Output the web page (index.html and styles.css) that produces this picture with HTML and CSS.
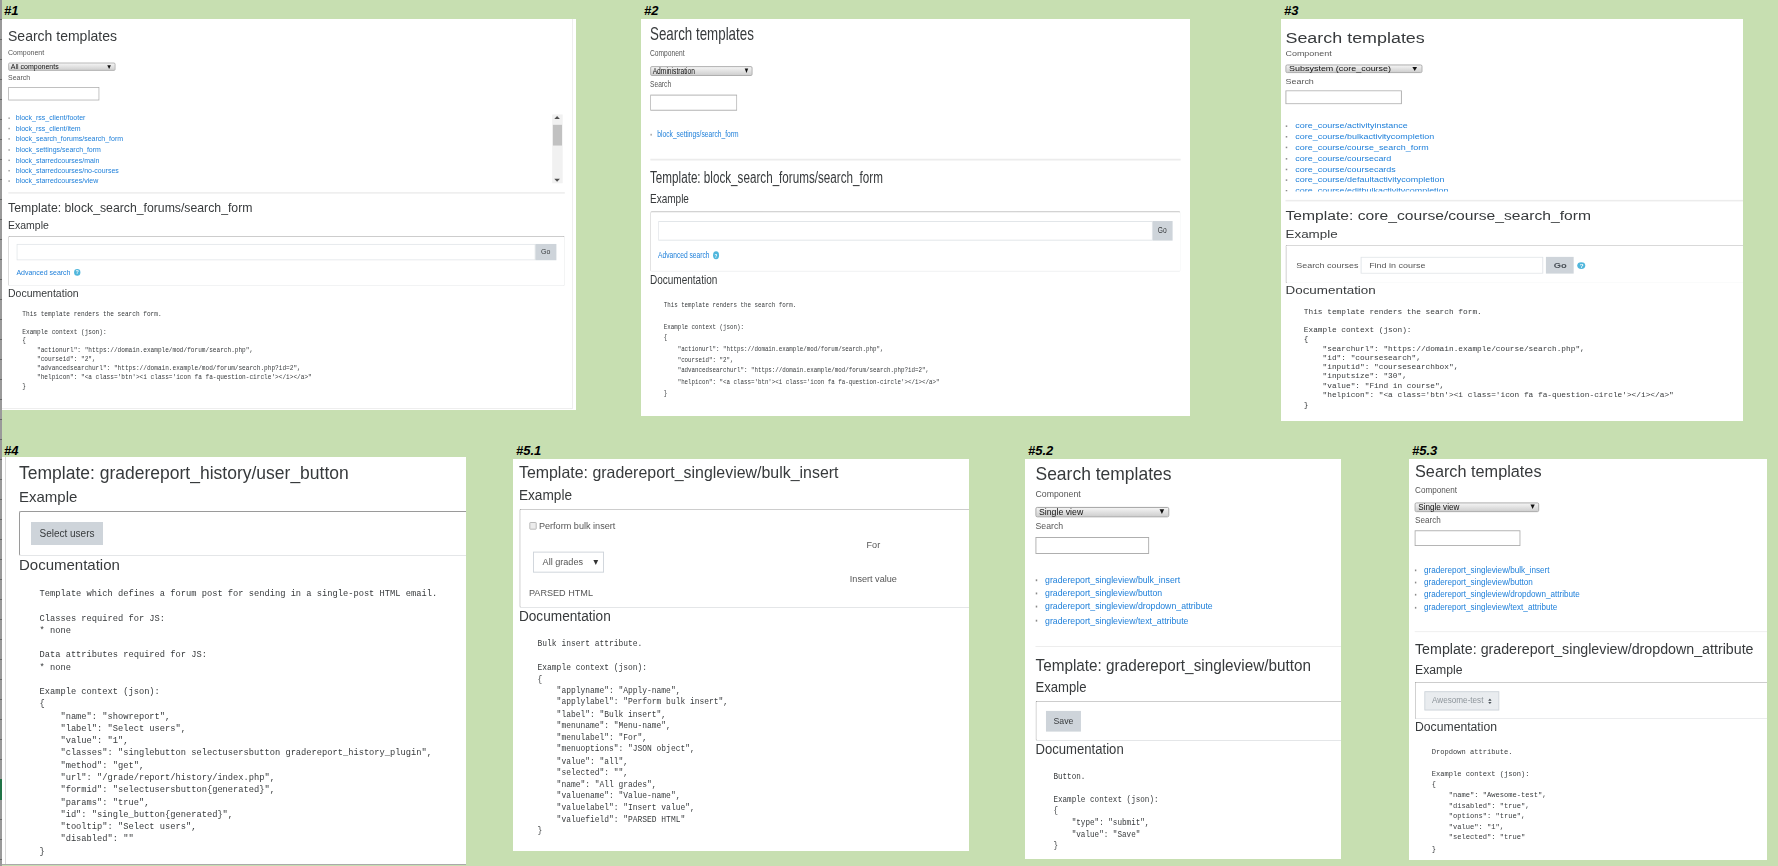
FILE: index.html
```html
<!DOCTYPE html>
<html lang="en">
<head>
<meta charset="utf-8">
<title>Template library screenshots</title>
<link rel="stylesheet" href="styles.css">
</head>
<body>
<div class="edge"></div>
<div class="edge-mark"></div>

<section class="shot s1">
  <div class="tag">#1</div>
  <div class="panel">
    <div class="sheet">
      <h2>Search templates</h2>
      <div class="lbl">Component</div>
      <div class="picker"><span>All components</span><i>▼</i></div>
      <div class="lbl lbl-search">Search</div>
      <div class="search"></div>
      <div class="list-wrap">
        <ul class="list">
          <li><a>block_rss_client/footer</a></li>
          <li><a>block_rss_client/item</a></li>
          <li><a>block_search_forums/search_form</a></li>
          <li><a>block_settings/search_form</a></li>
          <li><a>block_starredcourses/main</a></li>
          <li><a>block_starredcourses/no-courses</a></li>
          <li><a>block_starredcourses/view</a></li>
        </ul>
        <div class="scrollbar"><b class="up"></b><b class="thumb"></b><b class="down"></b></div>
      </div>
      <div class="rule"></div>
      <h2 class="tpl">Template: block_search_forums/search_form</h2>
      <h3>Example</h3>
      <div class="box">
        <div class="input-row"><div class="field"></div><div class="btn go">Go</div></div>
        <div class="adv"><a>Advanced search</a><span class="help">?</span></div>
      </div>
      <h3 class="doc">Documentation</h3>
<pre>This template renders the search form.

Example context (json):
{
    "actionurl": "https://domain.example/mod/forum/search.php",
    "courseid": "2",
    "advancedsearchurl": "https://domain.example/mod/forum/search.php?id=2",
    "helpicon": "&lt;a class='btn'&gt;&lt;i class='icon fa fa-question-circle'&gt;&lt;/i&gt;&lt;/a&gt;"
}</pre>
    </div>
  </div>
</section>

<section class="shot s2">
  <div class="tag">#2</div>
  <div class="panel">
    <div class="sheet">
      <h2>Search templates</h2>
      <div class="lbl">Component</div>
      <div class="picker"><span>Administration</span><i>▼</i></div>
      <div class="lbl lbl-search">Search</div>
      <div class="search"></div>
      <div class="list-wrap">
        <ul class="list">
          <li><a>block_settings/search_form</a></li>
        </ul>
      </div>
      <div class="rule"></div>
      <h2 class="tpl">Template: block_search_forums/search_form</h2>
      <h3>Example</h3>
      <div class="box">
        <div class="input-row"><div class="field"></div><div class="btn go">Go</div></div>
        <div class="adv"><a>Advanced search</a><span class="help">?</span></div>
      </div>
      <h3 class="doc">Documentation</h3>
<pre>This template renders the search form.

Example context (json):
{
    "actionurl": "https://domain.example/mod/forum/search.php",
    "courseid": "2",
    "advancedsearchurl": "https://domain.example/mod/forum/search.php?id=2",
    "helpicon": "&lt;a class='btn'&gt;&lt;i class='icon fa fa-question-circle'&gt;&lt;/i&gt;&lt;/a&gt;"
}</pre>
    </div>
  </div>
</section>

<section class="shot s3">
  <div class="tag">#3</div>
  <div class="panel">
    <div class="sheet">
      <h2>Search templates</h2>
      <div class="lbl">Component</div>
      <div class="picker"><span>Subsystem (core_course)</span><i>▼</i></div>
      <div class="lbl lbl-search">Search</div>
      <div class="search"></div>
      <div class="list-wrap">
        <ul class="list">
          <li><a>core_course/activityinstance</a></li>
          <li><a>core_course/bulkactivitycompletion</a></li>
          <li><a>core_course/course_search_form</a></li>
          <li><a>core_course/coursecard</a></li>
          <li><a>core_course/coursecards</a></li>
          <li><a>core_course/defaultactivitycompletion</a></li>
          <li><a>core_course/editbulkactivitycompletion</a></li>
        </ul>
      </div>
      <div class="rule"></div>
      <h2 class="tpl">Template: core_course/course_search_form</h2>
      <h3>Example</h3>
      <div class="box box-course">
        <span class="course-label">Search courses</span>
        <div class="field field-course">Find in course</div>
        <div class="btn go-course">Go</div>
        <span class="help">?</span>
      </div>
      <h3 class="doc">Documentation</h3>
<pre>This template renders the search form.

Example context (json):
{
    "searchurl": "https://domain.example/course/search.php",
    "id": "coursesearch",
    "inputid": "coursesearchbox",
    "inputsize": "30",
    "value": "Find in course",
    "helpicon": "&lt;a class='btn'&gt;&lt;i class='icon fa fa-question-circle'&gt;&lt;/i&gt;&lt;/a&gt;"
}</pre>
    </div>
  </div>
</section>

<section class="shot s4">
  <div class="tag">#4</div>
  <div class="panel">
    <div class="sheet">
      <h2 class="tpl tpl-first">Template: gradereport_history/user_button</h2>
      <h3>Example</h3>
      <div class="box"><div class="btn btn-big">Select users</div></div>
      <h3 class="doc">Documentation</h3>
<pre>Template which defines a forum post for sending in a single-post HTML email.

Classes required for JS:
* none

Data attributes required for JS:
* none

Example context (json):
{
    "name": "showreport",
    "label": "Select users",
    "value": "1",
    "classes": "singlebutton selectusersbutton gradereport_history_plugin",
    "method": "get",
    "url": "/grade/report/history/index.php",
    "formid": "selectusersbutton{generated}",
    "params": "true",
    "id": "single_button{generated}",
    "tooltip": "Select users",
    "disabled": ""
}</pre>
    </div>
  </div>
</section>

<section class="shot s51">
  <div class="tag">#5.1</div>
  <div class="panel">
    <div class="sheet">
      <h2 class="tpl tpl-first">Template: gradereport_singleview/bulk_insert</h2>
      <h3>Example</h3>
      <div class="box box-bulk">
        <div class="check-row"><span class="check"></span>Perform bulk insert</div>
        <div class="mid">For</div>
        <div class="grades"><span>All grades</span><i>▼</i></div>
        <div class="mid">Insert value</div>
        <div>PARSED HTML</div>
      </div>
      <h3 class="doc">Documentation</h3>
<pre>Bulk insert attribute.

Example context (json):
{
    "applyname": "Apply-name",
    "applylabel": "Perform bulk insert",
    "label": "Bulk insert",
    "menuname": "Menu-name",
    "menulabel": "For",
    "menuoptions": "JSON object",
    "value": "all",
    "selected": "",
    "name": "All grades",
    "valuename": "Value-name",
    "valuelabel": "Insert value",
    "valuefield": "PARSED HTML"
}</pre>
    </div>
  </div>
</section>

<section class="shot s52">
  <div class="tag">#5.2</div>
  <div class="panel">
    <div class="sheet">
      <h2>Search templates</h2>
      <div class="lbl">Component</div>
      <div class="picker"><span>Single view</span><i>▼</i></div>
      <div class="lbl lbl-search">Search</div>
      <div class="search"></div>
      <div class="list-wrap">
        <ul class="list">
          <li><a>gradereport_singleview/bulk_insert</a></li>
          <li><a>gradereport_singleview/button</a></li>
          <li><a>gradereport_singleview/dropdown_attribute</a></li>
          <li><a>gradereport_singleview/text_attribute</a></li>
        </ul>
      </div>
      <div class="rule"></div>
      <h2 class="tpl">Template: gradereport_singleview/button</h2>
      <h3>Example</h3>
      <div class="box box-save"><div class="btn btn-save">Save</div></div>
      <h3 class="doc">Documentation</h3>
<pre>Button.

Example context (json):
{
    "type": "submit",
    "value": "Save"
}</pre>
    </div>
  </div>
</section>

<section class="shot s53">
  <div class="tag">#5.3</div>
  <div class="panel">
    <div class="sheet">
      <h2>Search templates</h2>
      <div class="lbl">Component</div>
      <div class="picker"><span>Single view</span><i>▼</i></div>
      <div class="lbl lbl-search">Search</div>
      <div class="search"></div>
      <div class="list-wrap">
        <ul class="list">
          <li><a>gradereport_singleview/bulk_insert</a></li>
          <li><a>gradereport_singleview/button</a></li>
          <li><a>gradereport_singleview/dropdown_attribute</a></li>
          <li><a>gradereport_singleview/text_attribute</a></li>
        </ul>
      </div>
      <div class="rule"></div>
      <h2 class="tpl">Template: gradereport_singleview/dropdown_attribute</h2>
      <h3>Example</h3>
      <div class="box box-save">
        <div class="disabled-select"><span>Awesome-test</span>
          <svg class="updown" viewBox="0 0 6 10" width="6" height="10"><path d="M3 0.5 6 4H0z M3 9.5 0 6h6z" fill="#495057"/></svg>
        </div>
      </div>
      <h3 class="doc">Documentation</h3>
<pre>Dropdown attribute.

Example context (json):
{
    "name": "Awesome-test",
    "disabled": "true",
    "options": "true",
    "value": "1",
    "selected": "true"
}</pre>
    </div>
  </div>
</section>
</body>
</html>
```
FILE: styles.css
```css
* { box-sizing: border-box; }
html, body { margin: 0; height: 100%; }
body {
  position: relative;
  height: 866px;
  overflow: hidden;
  background: #c7dfb1;
  font-family: "Liberation Sans", Arial, sans-serif;
}
.edge {
  position: absolute; left: 0; top: 0; bottom: 0; width: 2px;
  background: repeating-linear-gradient(#9a9a9a 0 19px, #666 19px 20px);
}
.edge-mark { position: absolute; left: 0; top: 779px; width: 2px; height: 21px; background: #217346; }

/* each screenshot sits on a free canvas */
.shot { position: absolute; left: var(--x); top: var(--y); width: var(--w); }
.tag {
  height: var(--th, 16px); padding-left: var(--tx, 3px);
  font: italic bold 13px/15px "Liberation Sans", Arial, sans-serif;
  color: #000;
}
.panel { height: var(--h); background: #fff; overflow: hidden; }

.s1 { --x: 2px; --y: 3px; --w: 574px; --h: 391px; --tx: 2px;
  --sx: .7; --sy: .74; --pt: 11px; --pl: 8.6px; --sel: 7px; --sg: 3px; --lt: 17px; --lh: 99px; --lb: 8px; }
.s2 { --x: 641px; --y: 3px; --w: 549px; --h: 397px;
  --sx: .667; --sy: .89; --pt: 5px; --pl: 13.5px; --lt: 20px; --lb: 20px; }
.s3 { --x: 1281px; --y: 3px; --w: 462px; --h: 402px;
  --sx: .895; --sy: .76; --pt: 12px; --pl: 5px; --sg: 4px; --lt: 22px; --lh: 93px; --lb: 11px; }
.s4 { --x: 2px; --y: 443px; --w: 464px; --h: 408px; --tx: 2px; --th: 14px;
  --sx: 1; --sy: 1; --pt: 4px; --pl: 17px; }
.s51 { --x: 513px; --y: 443px; --w: 456px; --h: 392px;
  --sx: .91; --sy: .955; --pt: 2px; --pl: 6.5px; }
.s52 { --x: 1025px; --y: 443px; --w: 316px; --h: 400px;
  --sx: .874; --sy: .94; --pt: 3px; --pl: 12px; }
.s53 { --x: 1409px; --y: 443px; --w: 358px; --h: 401px;
  --sx: .813; --sy: .87; --pt: 2px; --pl: 7.4px; }

.s1 .panel { box-shadow: inset -3px -1px 0 #fff, inset -4px -2px 0 #eee; }
.s4 .panel { border-bottom: 1px solid #aaa; box-shadow: inset 3px 0 0 #fff, inset 4px 0 0 #d8d8d8; }

/* page content, laid out at one size and squeezed like the pasted picture */
.sheet {
  width: calc(795px + var(--pl));
  padding: var(--pt) 0 0 var(--pl);
  transform: scale(var(--sx), var(--sy));
  transform-origin: 0 0;
  filter: blur(.3px);
  font-size: 10px;
  line-height: 14px;
  color: #373a3c;
}
h2 { margin: 0; font-size: 20px; line-height: 24px; font-weight: 400; white-space: nowrap; }
h3 { margin: 3px 0 0; font-size: 15px; line-height: 18px; font-weight: 400; }
h3.doc { margin-top: 0; }
.tpl { margin-top: 7px; font-size: 17.5px; }
.tpl-first { margin-top: 0; }

.lbl { margin-top: 3px; color: #555; }
.lbl-search { margin-top: var(--sg, 2px); }
.picker {
  display: flex; justify-content: space-between; align-items: center;
  width: 153px; height: 11px; margin-top: var(--sel, 7px); padding: 0 3px;
  border: 1px solid #999; border-radius: 2px;
  background: linear-gradient(#f4f4f4, #cfcfcf);
  color: #111; font-size: 10px; line-height: 9px; white-space: nowrap;
}
.picker i { font-style: normal; font-size: 9px; }
.search {
  width: 130px; height: 18px; margin-top: 5px;
  border: 1px solid #aaa; background: #fff;
}
.list-wrap { position: relative; margin-top: var(--lt, 21px); }
.list { list-style: none; margin: 0; padding: 0; max-height: var(--lh, none); overflow: hidden; }
.list li { display: flex; align-items: center; height: 14.2px; line-height: 14.2px; }
.list li::before {
  content: ""; flex: none; width: 2px; height: 2px; margin-right: 9px; background: #8a8a8a;
}
a { color: #2080da; white-space: nowrap; }
.scrollbar {
  position: absolute; right: 3px; top: 2px; width: 15px; height: 93px;
  display: flex; flex-direction: column; justify-content: space-between; align-items: center;
  background: #f1f1f1;
}
.scrollbar .thumb { width: 13px; height: 28px; margin-bottom: 38px; background: #c1c1c1; }
.scrollbar .up, .scrollbar .down { width: 0; height: 0; border: 4px solid transparent; margin: 2px 0; }
.scrollbar .up { border-bottom-color: #505050; border-top-width: 0; }
.scrollbar .down { border-top-color: #505050; border-bottom-width: 0; }
.rule { height: 1.5px; margin-top: var(--lb, 20px); background: #ececec; }

.box {
  margin-top: 5px; padding: 10px 11px;
  border: 1px solid #e4e6e8; border-top-color: #9a9a9a; border-left-color: #9a9a9a;
  border-radius: 2px;
}
.box-save { padding-bottom: 9px; }
.input-row { display: flex; height: 22px; }
.field { flex: 1; border: 1px solid #dfe3e7; background: #fff; }
.btn { background: #ced4da; color: #373a3c; text-align: center; }
.go { width: 30px; line-height: 22px; }
.adv { display: flex; align-items: center; margin-top: 10px; gap: 5px; }
.help {
  display: inline-block; width: 9px; height: 9px; border-radius: 50%;
  background: #4fb6dc; color: #fff; font-size: 7px; font-weight: 700; line-height: 9px; text-align: center;
}
.btn-big { width: 72px; height: 23px; line-height: 23px; }
.btn-save { width: 40px; height: 22px; line-height: 22px; }

.box-course { display: flex; align-items: center; height: 51px; padding-top: 14px; padding-bottom: 10px; }
.course-label { color: #555; white-space: nowrap; margin-right: 3px; }
.field-course {
  flex: none; width: 204px; height: 22px; line-height: 20px; padding-left: 8px; color: #555;
}
.go-course { flex: none; width: 31px; height: 22px; line-height: 22px; margin: 0 4px 0 3px; font-size: 10.5px; font-weight: 700; color: #495057; }

.box-bulk { height: 104px; padding: 10px 10px 0; color: #555; }
.check-row { display: flex; align-items: center; height: 14px; gap: 3px; }
.check { width: 8px; height: 8px; border: 1px solid #b5b5b5; border-radius: 1px; background: #ececec; }
.mid { margin: 6px 16px 0 0; height: 14px; text-align: center; }
.grades {
  display: flex; justify-content: space-between; align-items: center;
  width: 78px; height: 22px; margin: 0 0 -2px 4px; padding: 0 3px 0 10px;
  border: 1px solid #ced4da;
}
.grades i { font-style: normal; font-size: 9px; color: #333; }
.box-bulk .mid + .grades + .mid { margin-top: 2px; }

.disabled-select {
  display: flex; justify-content: space-between; align-items: center;
  width: 92px; height: 22px; padding: 0 8px 0 8px;
  border: 1px solid #ced4da; background: #e9ecef; color: #8e959b;
}
.updown { width: 5px; height: 7px; }

pre {
  margin: 14px 0 0; padding-left: 20.5px;
  font-family: "Liberation Mono", "DejaVu Sans Mono", monospace;
  font-size: 8.73px; line-height: 12.27px; color: #373a3c;
}
```
